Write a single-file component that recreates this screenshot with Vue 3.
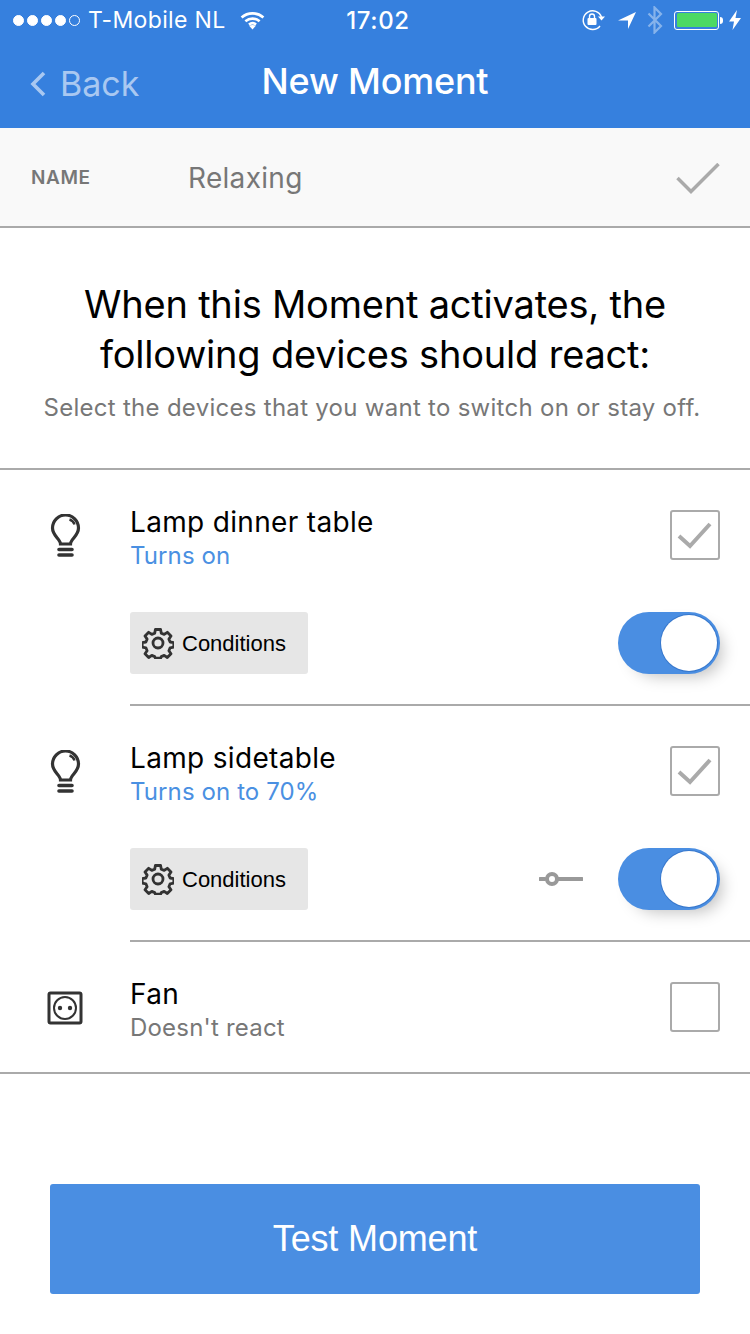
<script setup>
const devices = [
  { name: 'Lamp dinner table', status: 'Turns on', slider: false },
  { name: 'Lamp sidetable', status: 'Turns on to 70%', slider: true },
]
const signal = [1, 1, 1, 1, 0]
</script>

<template>
  <div class="page">
    <header class="top">
      <div class="status">
        <div class="status-left">
          <span class="dots">
            <i v-for="(on, n) in signal" :key="n" class="dot" :class="{ on }"></i>
          </span>
          <span class="carrier">T-Mobile NL</span>
          <svg class="wifi" width="25" height="19" viewBox="0 0 26 20" fill="none" stroke="#fff" stroke-width="2.800">
            <path d="M1.500 6.800C8 1 18 1 24.500 6.800" />
            <path d="M5.500 10.800C10 7 16 7 20.500 10.800" />
            <path d="M9.300 14.300C11.500 12.600 14.500 12.600 16.700 14.300" />
            <path d="M13 19.500l-3.500-3.900c2-1.100 5-1.100 7 0z" fill="#fff" stroke="none" />
          </svg>
        </div>
        <div class="time">17:02</div>
        <div class="status-right">
          <svg width="25" height="22" viewBox="0 0 25 22" fill="none">
            <path d="M20.500 8A9.400 9.400 0 1 0 19 17" stroke="#fff" stroke-width="1.400" />
            <path d="M17 7.500h7l-3.500 4z" fill="#fff" />
            <rect x="6.500" y="9" width="9" height="7" rx="1" fill="#fff" />
            <path d="M8.500 9V7.500a2.500 2.500 0 0 1 5 0V9" stroke="#fff" stroke-width="1.400" />
          </svg>
          <svg class="arrow" width="18" height="18" viewBox="0 0 18 18"><path d="M0 9.500 18 1l-8 17V9.500z" fill="#fff" /></svg>
          <svg class="bt" width="16" height="28" viewBox="0 0 16 28" fill="none" stroke="#fff" stroke-opacity=".4" stroke-width="2.200">
            <path d="M1.500 7.500 14 20l-6.500 6.500V1.500L14 8 1.500 20.500" />
          </svg>
          <span class="battery"><span class="battery-fill"></span></span>
          <span class="nub"></span>
          <svg class="bolt" width="12" height="20" viewBox="0 0 12 20"><path d="M8 0 0 11.500h5L3.500 20 12 8H6.500z" fill="#fff" /></svg>
        </div>
      </div>
      <nav class="nav">
        <div class="back">
          <svg width="16" height="26" viewBox="0 0 16 26" fill="none" stroke="#a9c8f1" stroke-width="3.600">
            <path d="M14 2 3 13l11 11" />
          </svg>
          <span>Back</span>
        </div>
        <h1 class="title">New Moment</h1>
      </nav>
    </header>

    <section class="name-row">
      <span class="name-label">NAME</span>
      <span class="name-value">Relaxing</span>
      <svg class="name-check" width="44" height="32" viewBox="0 0 44 32" fill="none" stroke="#aaa" stroke-width="3.500">
        <path d="M1.500 15 15 28.500 42.500 1" />
      </svg>
    </section>

    <section class="intro">
      <h2>When this Moment activates, the<br />following devices should react:</h2>
      <p>Select the devices that you want to switch on or stay off.</p>
    </section>

    <section class="list">
      <article v-for="d in devices" :key="d.name" class="device">
        <div class="device-icon">
          <svg width="32" height="46" viewBox="0 0 32 46" fill="none" stroke="#333" stroke-width="3.200">
            <path d="M10.500 30c0-5-8-8-8-16a13 13 0 0 1 26 0c0 8-8 11-8 16z" />
            <path d="M19.500 5.500c2.500.8 4.300 2.600 5 5" stroke-width="2.400" />
            <path d="M9 35.500h13M9 41h13" stroke-width="3.600" stroke-linecap="round" />
          </svg>
        </div>
        <div class="device-body">
          <div class="device-top">
            <div class="device-text">
              <div class="device-name">{{ d.name }}</div>
              <div class="device-status">{{ d.status }}</div>
            </div>
            <span class="checkbox">
              <svg width="36" height="28" viewBox="0 0 36 28" fill="none" stroke="#aaa" stroke-width="4">
                <path d="M2 15l11 10L33 3" />
              </svg>
            </span>
          </div>
          <div class="device-bottom">
            <button class="conditions">
              <svg width="32" height="32" viewBox="0 0 32 32" fill="none" stroke="#333" stroke-width="2.800" stroke-linejoin="round">
                <path d="M13.400 2.500h5.200l.7 3.700 2.900 1.200 3.100-2.100 3.700 3.700-2.100 3.100 1.200 2.900 3.700.7v4.400l-3.700.7-1.200 2.900 2.100 3.100-3.700 3.700-3.100-2.100-2.900 1.200-.7 1.600h-5.200l-.7-1.600-2.900-1.200-3.100 2.100-3.700-3.700 2.100-3.100-1.200-2.900-3.700-.7v-4.400l3.700-.7 1.200-2.900-2.100-3.100 3.700-3.700 3.100 2.100 2.900-1.200z" />
                <circle cx="16" cy="16" r="5" />
              </svg>
              <span class="conditions-label">Conditions</span>
            </button>
            <div class="controls">
              <svg v-if="d.slider" class="slider" width="44" height="14" viewBox="0 0 44 14" fill="none" stroke="#999" stroke-width="4">
                <path d="M1 7h5M19 7h24" stroke-linecap="round" />
                <circle cx="13" cy="7" r="5" />
              </svg>
              <span class="toggle"><span class="knob"></span></span>
            </div>
          </div>
        </div>
      </article>

      <article class="device device-last">
        <div class="device-icon socket">
          <svg width="36" height="34" viewBox="0 0 36 34" fill="none" stroke="#333" stroke-width="3">
            <rect x="2" y="2" width="32" height="30" rx="1.500" />
            <circle cx="18" cy="17" r="11" stroke-width="2" />
            <circle cx="13" cy="17" r="2.200" fill="#333" stroke="none" />
            <circle cx="23" cy="17" r="2.200" fill="#333" stroke="none" />
          </svg>
        </div>
        <div class="device-body">
          <div class="device-top">
            <div class="device-text">
              <div class="device-name">Fan</div>
              <div class="device-status off">Doesn't react</div>
            </div>
            <span class="checkbox"></span>
          </div>
        </div>
      </article>
    </section>

    <div class="footer">
      <button class="test">Test Moment</button>
    </div>
  </div>
</template>

<style>
html, body { margin: 0; background: #fff; }
</style>

<style scoped>
.page {
  width: 750px;
  height: 1334px;
  overflow: hidden;
  background: #fff;
  font-family: Inter, "Noto Sans", sans-serif;
  color: #000;
}
.top { background: #3680de; color: #fff; height: 128px; }
.status {
  height: 40px;
  padding: 0 9px 0 13px;
  display: grid;
  grid-template-columns: 1fr auto 1fr;
  align-items: center;
  font-size: 23px;
}
.status-left { display: flex; align-items: center; }
.dots { display: flex; gap: 3px; }
.dot { width: 11px; height: 11px; box-sizing: border-box; border: 1px solid #fff; border-radius: 50%; }
.dot.on { background: #fff; }
.carrier { margin-left: 8px; letter-spacing: .35px; }
.wifi { margin-left: 14px; }
.time { font-size: 24px; font-weight: 500; letter-spacing: .6px; margin-left: 2px; }
.status-right { display: flex; align-items: center; justify-content: flex-end; }
.arrow { margin-left: 12px; }
.bt { margin-left: 11px; }
.battery {
  margin-left: 11px;
  width: 45px;
  height: 19px;
  box-sizing: border-box;
  border: 1px solid #fff;
  border-radius: 3px;
  padding: 1.500px;
  display: flex;
}
.battery-fill { flex: 1; background: #4cd964; border-radius: 1.500px; }
.nub { width: 3px; height: 7px; background: #fff; border-radius: 0 3px 3px 0; margin-left: 1px; }
.bolt { margin-left: 6px; }
.nav { height: 88px; padding-bottom: 6px; box-sizing: border-box; position: relative; display: flex; align-items: center; justify-content: center; }
.back {
  position: absolute;
  left: 30px;
  top: 23px;
  display: flex;
  align-items: center;
  gap: 14px;
  color: #a9c8f1;
  font-size: 34px;
}
.title { margin: 0; font-size: 36px; font-weight: 500; line-height: 44px; letter-spacing: -.2px; }
.name-row {
  height: 98px;
  background: #f9f9f9;
  border-bottom: 2px solid #aaa;
  display: flex;
  align-items: center;
  padding: 0 30px;
}
.name-label { width: 158px; font-size: 19px; font-weight: 600; color: #777; letter-spacing: .6px; padding-left: 1px; box-sizing: border-box; }
.name-value { font-size: 28px; color: #777; flex: 1; letter-spacing: .3px; padding-top: 2px; }
.name-check { margin-top: 3px; }
.intro {
  height: 242px;
  box-sizing: border-box;
  padding-top: 51px;
  text-align: center;
  border-bottom: 2px solid #aaa;
}
.intro h2 { margin: 0; font-size: 38px; line-height: 50px; font-weight: 400; letter-spacing: -.2px; }
.intro p { margin: 14px 6px 0 0; font-size: 24px; line-height: 30px; color: #777; letter-spacing: .28px; }
.device { display: flex; }
.device-icon { width: 130px; flex: none; padding: 44px 0 0 50px; box-sizing: border-box; height: 100px; }
.device-body { flex: 1; height: 234px; border-bottom: 2px solid #aaa; }
.device-top { display: flex; justify-content: space-between; padding: 35px 30px 0 0; height: 106px; box-sizing: border-box; }
.device-name { font-size: 28px; line-height: 34px; letter-spacing: .33px; }
.device-status { font-size: 24px; line-height: 34px; color: #4a90e2; letter-spacing: .1px; }
.device-status.off { color: #777; letter-spacing: .2px; }
.checkbox {
  width: 50px;
  height: 50px;
  margin-top: 5px;
  box-sizing: border-box;
  border: 2px solid #aaa;
  border-radius: 3px;
  display: flex;
  align-items: center;
  justify-content: center;
}
.device-bottom { display: flex; justify-content: space-between; align-items: center; padding: 36px 30px 0 0; }
.conditions {
  width: 178px;
  height: 62px;
  background: #e6e6e6;
  border: 0;
  border-radius: 3px;
  padding: 0 0 0 12px;
  display: flex;
  align-items: center;
  gap: 8px;
  font-family: "Liberation Sans", sans-serif;
  font-size: 22px;
  color: #000;
}
.conditions-label { padding-top: 2px; }
.controls { display: flex; align-items: center; gap: 35px; }
.toggle {
  width: 102px;
  height: 62px;
  border-radius: 31px;
  background: #4a8ee2;
  position: relative;
  box-shadow: 8px 8px 16px -6px rgba(0, 0, 0, .25);
}
.knob {
  position: absolute;
  right: 3px;
  top: 3px;
  width: 56px;
  height: 56px;
  border-radius: 50%;
  background: #fff;
  box-shadow: 0 0 0 1px #3878cc;
}
.device-last { border-bottom: 2px solid #aaa; }
.device-last .device-body { height: 130px; border-bottom: 0; }
.socket { padding-top: 49px; padding-left: 47px; }
.footer { padding: 110px 50px 0; }
.test {
  width: 650px;
  height: 110px;
  background: #4a8ee2;
  border: 0;
  border-radius: 3px;
  color: #fff;
  font-family: "Liberation Sans", sans-serif;
  font-size: 36px;
  letter-spacing: -.15px;
}
</style>
